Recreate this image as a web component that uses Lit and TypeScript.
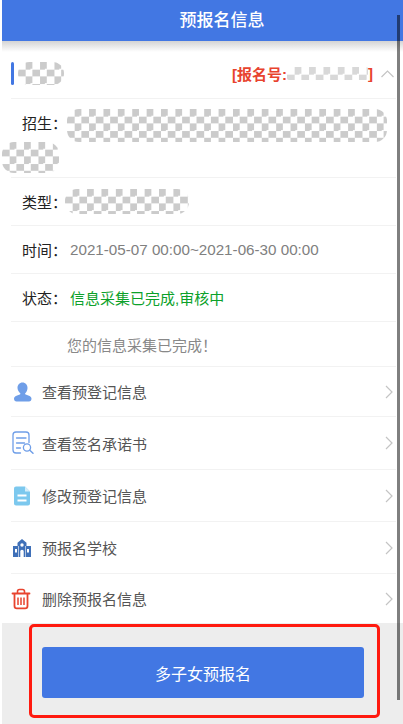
import { LitElement, html, css, svg } from "lit";
import { customElement } from "lit/decorators.js";

const icons = {
  user: svg`<path d="M11.500 2.500c3 0 5 2.400 5 5.500 0 2.200-1 4-2.200 5.200-.4.500-.2 1 .4 1.300l3.300 1.300c1.500.6 2.500 1.600 2.500 3 0 1.400-1 2.700-2.500 2.700H5.500C4 21.500 3 20.200 3 18.800c0-1.400 1-2.400 2.500-3l3.300-1.300c.6-.3.8-.8.4-1.300C8 12 6.500 10.200 6.500 8c0-3.100 2-5.500 5-5.500z" fill="#6f9ee8"/>`,
  sign: svg`<path d="M9.500 22H5c-1.700 0-3-1.300-3-3V4c0-1.700 1.300-3 3-3h10c1.700 0 3 1.300 3 3v7.500" fill="none" stroke="#6f9ee8" stroke-width="1.300" stroke-linecap="round"/><path d="M5.500 7h9.500M5.500 12h8M5.500 17h4" fill="none" stroke="#6f9ee8" stroke-width="1.300" stroke-linecap="round"/><circle cx="16" cy="16.500" r="3.600" fill="none" stroke="#6f9ee8" stroke-width="1.300"/><path d="M18.800 19.300l3.200 3" fill="none" stroke="#6f9ee8" stroke-width="1.500" stroke-linecap="round"/>`,
  edit: svg`<path d="M5 2.500h9l5 5v12c0 1.100-.9 2-2 2H5c-1.100 0-2-.9-2-2v-15c0-1.100.9-2 2-2z" fill="#7cc8ee"/><path d="M14 2.500l5 5h-5z" fill="#d4eefa"/><rect x="6.500" y="10.500" width="9" height="2" fill="#fff"/><rect x="6.500" y="15.500" width="9" height="2" fill="#fff"/>`,
  school: svg`<path d="M11 3l4.500 3.800V10H20v11H2V10h4.500V6.800z" fill="#3f70b8"/><circle cx="11" cy="9" r="1.700" fill="#fff"/><path d="M9.300 21v-5.500c0-1 .7-1.700 1.700-1.700s1.700.7 1.700 1.700V21z" fill="#fff"/><rect x="4" y="13" width="2" height="3.500" fill="#fff"/><rect x="16" y="13" width="2" height="3.500" fill="#fff"/><path d="M7.500 10v11M14.500 10v11" stroke="#fff" stroke-width=".6"/>`,
  trash: svg`<path d="M1.500 6.500h17" stroke="#e8432e" stroke-width="1.800" stroke-linecap="round" fill="none"/><path d="M6.500 6V4.500c0-1.100.9-2 2-2h3c1.100 0 2 .9 2 2V6" fill="none" stroke="#e8432e" stroke-width="1.600"/><path d="M3.500 7v12c0 1.400 1 2.400 2.400 2.400h8.200c1.400 0 2.400-1 2.400-2.400V7" fill="none" stroke="#e8432e" stroke-width="1.800"/><path d="M7 10.500V18M10 10.500V18M13 10.500V18" stroke="#e8432e" stroke-width="1.500" fill="none"/>`,
};

const menu = [
  { icon: icons.user, label: "查看预登记信息" },
  { icon: icons.sign, label: "查看签名承诺书" },
  { icon: icons.edit, label: "修改预登记信息" },
  { icon: icons.school, label: "预报名学校" },
  { icon: icons.trash, label: "删除预报名信息" },
];

@customElement("app-root")
export class AppRoot extends LitElement {
  static styles = css`
    :host {
      display: block;
      position: relative;
      width: 403px;
      height: 724px;
      overflow: hidden;
      background: #fff;
      font-family: "Liberation Sans", "Noto Sans CJK SC", sans-serif;
    }
    .page {
      margin-left: 2px;
      width: 401px;
      height: 724px;
      display: flex;
      flex-direction: column;
      background: #fff;
    }
    .header {
      height: 41px;
      flex: none;
      background: #4277e3;
      color: #fff;
      font-size: 17px;
      font-weight: 500;
      display: flex;
      align-items: center;
      justify-content: center;
      padding: 0 0 4px 39px;
      box-sizing: border-box;
    }
    .shade {
      height: 11px;
      flex: none;
      margin-bottom: -11px;
      background: linear-gradient(#d4d4d4, #ffffff00);
      position: relative;
    }
    .content {
      flex: 1;
      padding: 0 7px 0 9px;
      min-height: 0;
    }
    .row {
      border-bottom: 1px solid #f2f2f2;
      display: flex;
      align-items: center;
      box-sizing: border-box;
    }
    .top {
      height: 58px;
      padding-top: 8px;
    }
    .bar {
      width: 3px;
      height: 23px;
      border-radius: 2px;
      background: #4277e3;
      flex: none;
    }
    .top > .mask {
      margin-left: 4px;
      width: 46px;
      height: 23px;
    }
    .apply {
      margin-left: auto;
      color: #e8432e;
      font-size: 15px;
      font-weight: 700;
      display: flex;
      align-items: center;
    }
    .apply .mask {
      width: 81px;
      height: 13px;
      border-radius: 2px;
      opacity: 0.75;
    }
    .chev {
      margin: 0 2px 0 8px;
      flex: none;
      display: block;
    }
    .mask {
      display: block;
      border-radius: 12px;
      background-color: #fff;
      background-image: conic-gradient(#cbcbcb 25%, #fff 0 50%, #cbcbcb 0 75%, #fff 0);
      background-size: 14.4px 14.4px;
      flex: none;
    }
    .label {
      font-size: 15px;
      color: #222;
      font-weight: 400;
      flex: none;
      width: 48px;
      margin-left: 11px;
      white-space: nowrap;
    }
    .value {
      font-size: 15px;
      color: #808080;
    }
    .enroll {
      height: 79px;
      display: block;
    }
    .enroll-line {
      display: flex;
      align-items: center;
      padding-top: 10px;
    }
    .enroll-line .label {
      margin-bottom: 6px;
    }
    .enroll-line .mask {
      width: 320px;
      height: 33px;
      margin-left: -3px;
    }
    .enroll > .mask {
      width: 57px;
      height: 31px;
      margin: 0 0 0 -9px;
    }
    .type,
    .time,
    .status {
      height: 48px;
    }
    .type .mask {
      width: 124px;
      height: 25px;
      margin-left: -5px;
    }
    .time .value {
      font-size: 15.2px;
    }
    .status .value {
      color: #0ca12a;
    }
    .notice {
      height: 45px;
      padding-left: 56px;
      font-size: 15px;
      color: #888;
    }
    .item {
      height: 52px;
      padding-right: 3px;
      font-size: 15px;
      color: #555;
    }
    .item:nth-of-type(7) { height: 50px; }
    .item:nth-of-type(8) { height: 53px; }
    .item:nth-of-type(11) { height: 49px; border-bottom: none; }
    .item svg.ic {
      width: 24px;
      height: 24px;
      flex: none;
      margin-right: 7px;
    }
    .item .arrow {
      margin-left: auto;
      flex: none;
      display: block;
    }
    .footer {
      height: 101px;
      flex: none;
      background: #ededed;
      padding: 24px 0 0 40px;
      box-sizing: border-box;
    }
    .btn {
      display: block;
      width: 322px;
      height: 51px;
      background: #4277e3;
      border: none;
      border-radius: 3px;
      color: #fff;
      font: inherit;
      font-size: 16px;
      padding: 0;
    }
    .annot {
      position: absolute;
      left: 29px;
      top: 624px;
      width: 351px;
      height: 94px;
      box-sizing: border-box;
      border: 3px solid #ff1a0f;
      border-radius: 5px;
      pointer-events: none;
    }
    .scroll {
      position: absolute;
      left: 397px;
      top: 15px;
      width: 3px;
      height: 685px;
      background: rgba(0, 0, 0, 0.5);
    }
  `;

  render() {
    return html`
      <div class="page">
        <div class="header">预报名信息</div>
        <div class="shade"></div>
        <div class="content">
          <div class="row top">
            <span class="bar"></span>
            <span class="mask"></span>
            <span class="apply">[报名号:<span class="mask"></span>]</span>
            <svg class="chev" width="13" height="8" viewBox="0 0 13 8"><path d="M.5 7l6-6 6 6" fill="none" stroke="#c4c4c4" stroke-width="1.200"/></svg>
          </div>
          <div class="row enroll">
            <div class="enroll-line"><span class="label">招生：</span><span class="mask"></span></div>
            <span class="mask"></span>
          </div>
          <div class="row type"><span class="label">类型：</span><span class="mask"></span></div>
          <div class="row time"><span class="label">时间：</span><span class="value">2021-05-07 00:00~2021-06-30 00:00</span></div>
          <div class="row status"><span class="label">状态：</span><span class="value">信息采集已完成,审核中</span></div>
          <div class="row notice">您的信息采集已完成！</div>
          ${menu.map(
            (m) => html`<div class="row item">
              <svg class="ic" viewBox="0 0 24 24">${m.icon}</svg>
              <span>${m.label}</span>
              <svg class="arrow" width="8" height="14" viewBox="0 0 8 14"><path d="M1 1l6 6-6 6" fill="none" stroke="#c4c4c4" stroke-width="1.200"/></svg>
            </div>`
          )}
        </div>
        <div class="footer"><button class="btn">多子女预报名</button></div>
      </div>
      <div class="annot"></div>
      <div class="scroll"></div>
    `;
  }
}
